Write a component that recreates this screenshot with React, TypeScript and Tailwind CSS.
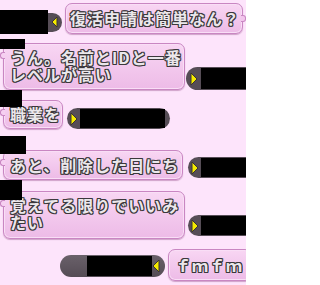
import React from "react";

const txt =
  "font-bold text-[16px] leading-[17px] tracking-[1px] text-[#ebe7eb] whitespace-nowrap [text-shadow:-1px_-1px_0_#3b383b,1px_-1px_0_#3b383b,-1px_1px_0_#3b383b,1px_1px_0_#3b383b,0_1px_0_#3b383b,0_-1px_0_#3b383b,1px_0_0_#3b383b,-1px_0_0_#3b383b]";

const bubble =
  "relative shrink-0 rounded-[7px] border border-[#c986c2] bg-gradient-to-b from-[#f8d6f3] to-[#edbbe7] shadow-[0_1px_1px_rgba(150,80,140,0.45),inset_0_0_0_1px_#f9def6]";

function Tri({ dir }: { dir: "left" | "right" }) {
  return (
    <svg width="8" height="14" viewBox="0 0 8 14" className="shrink-0">
      {dir === "right" ? (
        <polygon points="1,1 7,7 1,13" fill="#f4ea00" stroke="#3a3530" strokeWidth="1" strokeLinejoin="round" />
      ) : (
        <polygon points="7,1 1,7 7,13" fill="#f4ea00" stroke="#3a3530" strokeWidth="1" strokeLinejoin="round" />
      )}
    </svg>
  );
}

function LeftTail() {
  return (
    <div className="absolute left-[-4px] top-[8px] h-[7px] w-[5px] rounded-l-[3px] border-y border-l border-[#c986c2] bg-[#f6d0f1]" />
  );
}

export default function App() {
  return (
    <div
      className="relative flex h-[285px] w-[246px] flex-col overflow-hidden bg-[#fde4fb]"
      style={{ fontFamily: '"Noto Sans CJK JP", "Noto Sans", sans-serif' }}
    >
      {/* Row 1 */}
      <div className="mt-[3px] flex h-[31px] items-start">
        <div className="mt-[7px] flex h-[24px] w-[62px] shrink-0 items-center">
          <div className="h-[24px] w-[48px] bg-black" />
          <div className="flex h-[19px] w-[14px] items-center rounded-r-full bg-[#564d56] pl-[3px]">
            <svg width="7" height="12" viewBox="0 0 7 12" className="shrink-0">
              <polygon points="6,1 1,6 6,11" fill="#f4ea00" stroke="#3a3530" strokeWidth="1" strokeLinejoin="round" />
            </svg>
          </div>
        </div>
        <div className={`${bubble} ml-[3px] flex h-[31px] w-[178px] items-center pl-[4px]`}>
          <span className={txt}>復活申請は簡単なん？</span>
          <div className="absolute right-[-4px] top-[11px] h-[7px] w-[5px] rounded-r-[3px] border-y border-r border-[#c986c2] bg-[#f2c6ec]" />
        </div>
      </div>

      {/* Row 2 */}
      <div className="relative mt-[9px] flex h-[47px] items-start">
        <div className={`${bubble} ml-[3px] h-[47px] w-[182px] pl-[6px] pt-[5px]`}>
          <LeftTail />
          <div className={txt}>
            うん。名前とIDと一番
            <br />
            レベルが高い
          </div>
        </div>
        <div className="ml-[1px] mt-[24px] flex h-[23px] w-[62px] shrink-0 items-center rounded-l-full bg-[#564d56] pl-[4px]">
          <Tri dir="right" />
          <div className="ml-[3px] h-[21px] flex-1 bg-black" />
        </div>
        <div className="absolute left-0 top-[-4px] h-[10px] w-[25px] bg-black" />
      </div>

      {/* Row 3 */}
      <div className="relative mt-[10px] flex h-[29px] items-start">
        <div className={`${bubble} ml-[3px] flex h-[29px] w-[60px] items-center pl-[6px]`}>
          <LeftTail />
          <span className={txt}>職業を</span>
        </div>
        <div className="ml-[4px] mt-[8px] flex h-[21px] w-[103px] shrink-0 items-center rounded-full bg-[#564d56] pl-[3px]">
          <Tri dir="right" />
          <div className="ml-[2px] h-[19px] w-[85px] bg-black" />
        </div>
        <div className="absolute left-0 top-[-10px] h-[17px] w-[22px] bg-black" />
      </div>

      {/* Row 4 */}
      <div className="relative mt-[21px] flex h-[30px] items-start">
        <div className={`${bubble} ml-[3px] flex h-[30px] w-[180px] items-center pl-[6px]`}>
          <LeftTail />
          <span className={txt}>あと、削除した日にち</span>
        </div>
        <div className="ml-[5px] mt-[7px] flex h-[21px] w-[60px] shrink-0 items-center rounded-l-full bg-[#564d56] pl-[3px]">
          <Tri dir="right" />
          <div className="ml-[2px] h-[19px] flex-1 bg-black" />
        </div>
        <div className="absolute left-0 top-[-14px] h-[18px] w-[26px] bg-black" />
      </div>

      {/* Row 5 */}
      <div className="relative mt-[11px] flex h-[48px] items-start">
        <div className={`${bubble} ml-[3px] h-[48px] w-[182px] pl-[6px] pt-[5px]`}>
          <LeftTail />
          <div className={txt}>
            覚えてる限りでいいみ
            <br />
            たい
          </div>
        </div>
        <div className="ml-[3px] mt-[24px] flex h-[21px] w-[60px] shrink-0 items-center rounded-l-full bg-[#564d56] pl-[3px]">
          <Tri dir="right" />
          <div className="ml-[2px] h-[19px] flex-1 bg-black" />
        </div>
        <div className="absolute left-0 top-[-11px] h-[20px] w-[22px] bg-black" />
      </div>

      {/* Row 6 */}
      <div className="mt-[10px] flex h-[31px] items-start">
        <div className="ml-[60px] mt-[6px] flex h-[22px] w-[105px] shrink-0 items-center rounded-full bg-gradient-to-b from-[#6a616a] to-[#554c55] pl-[27px]">
          <div className="h-[20px] w-[65px] bg-black" />
          <Tri dir="left" />
        </div>
        <div className={`${bubble} ml-[3px] flex h-[32px] w-[84px] items-center pl-[6px]`}>
          <span className={txt}>ｆｍｆｍ</span>
        </div>
      </div>
    </div>
  );
}
